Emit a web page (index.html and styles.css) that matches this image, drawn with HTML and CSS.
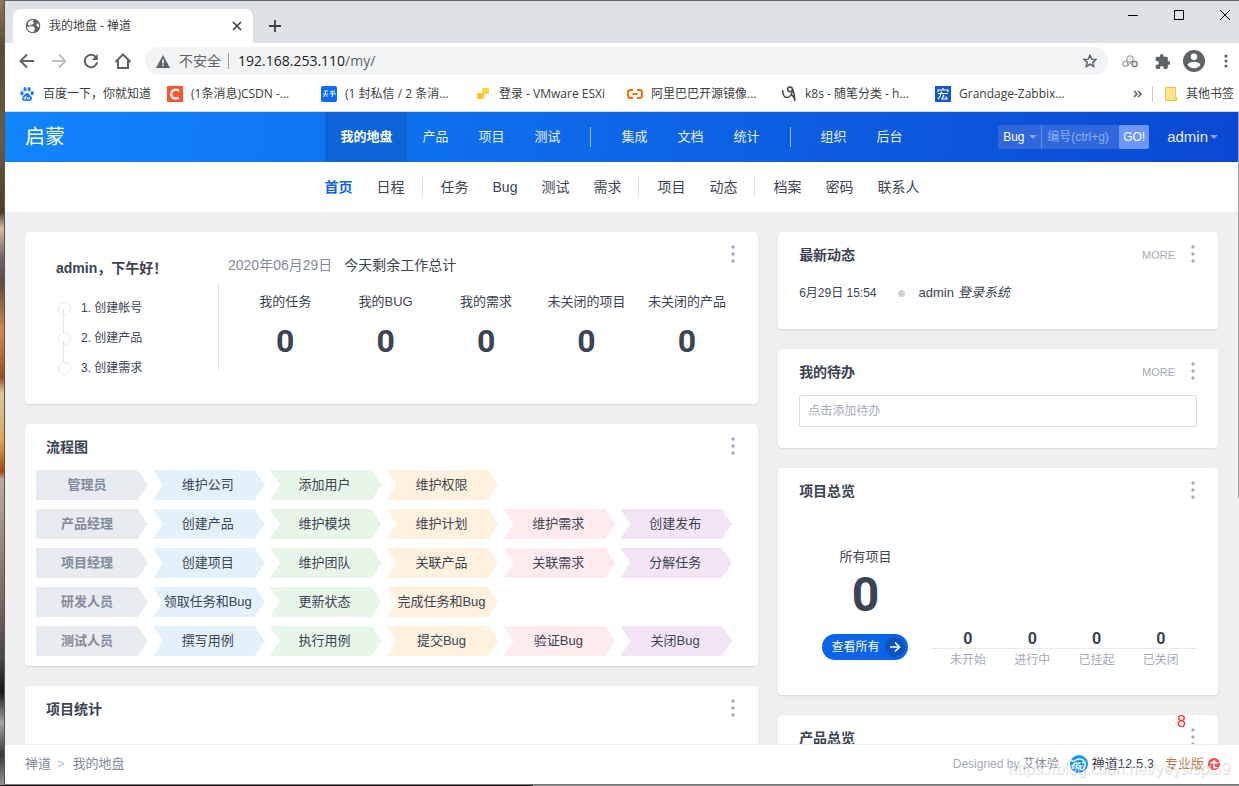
FILE: index.html
```html
<!DOCTYPE html>
<html lang="zh-CN">
<head>
<meta charset="utf-8">
<title>我的地盘 - 禅道</title>
<link rel="stylesheet" href="styles.css">
</head>
<body>
<svg class="defs" aria-hidden="true">
  <symbol id="dots" viewBox="0 0 4 18"><circle cx="2" cy="2" r="1.700"/><circle cx="2" cy="9" r="1.700"/><circle cx="2" cy="16" r="1.700"/></symbol>
</svg>
<div class="desktop">
<div class="window">
  <div class="tabstrip">
    <div class="tab">
      <svg width="16" height="16" viewBox="0 0 16 16"><circle cx="8" cy="8" r="7.300" fill="#5f6368"/><path d="M9 1.800L7.500 3.500 9 5 7 6.800H5L4.500 8l4 .5 1.500 1.800-1.500 3.900C5 14.500 2 12 1.900 8.600L5.500 9.500 3 6.800 3.200 4.500C4.500 2.500 7 1.700 9 1.800zM11 5.500l2.800.5.300 3-2-.5z" fill="#fff"/></svg>
      <span class="tab-title">我的地盘 - 禅道</span>
      <button class="bare" aria-label="关闭标签页"><svg width="10" height="10" viewBox="0 0 10 10" stroke="#3c4043" stroke-width="1.700"><path d="M1 1l8 8M9 1L1 9"/></svg></button>
    </div>
    <button class="bare" aria-label="新标签页"><svg width="12" height="12" viewBox="0 0 12 12" stroke="#3c4043" stroke-width="1.800"><path d="M6 0v12M0 6h12"/></svg></button>
    <div class="wincontrols">
      <button class="bare" aria-label="最小化"><svg width="10" height="10" viewBox="0 0 10 10" stroke="#000"><path d="M0 5.500h10"/></svg></button>
      <button class="bare" aria-label="最大化"><svg width="10" height="10" viewBox="0 0 10 10" stroke="#000" fill="none"><path d="M.5.5h9v9h-9z"/></svg></button>
      <button class="bare" aria-label="关闭"><svg width="10" height="10" viewBox="0 0 10 10" stroke="#000"><path d="M0 0l10 10M10 0L0 10"/></svg></button>
    </div>
  </div>
  <div class="toolbar">
    <button class="bare" aria-label="后退"><svg width="16" height="16" viewBox="0 0 16 16" stroke="#5f6368" stroke-width="2" fill="none"><path d="M15 8H2M8 1.500L1.500 8 8 14.500"/></svg></button>
    <button class="bare" aria-label="前进"><svg width="16" height="16" viewBox="0 0 16 16" stroke="#bdc1c6" stroke-width="2" fill="none"><path d="M1 8h13M8 1.500L14.500 8 8 14.500"/></svg></button>
    <button class="bare" aria-label="重新加载"><svg width="16" height="16" viewBox="0 0 16 16" fill="none"><path d="M13 4.200A6.200 6.200 0 1 0 14.200 9.300" stroke="#5f6368" stroke-width="2"/><path d="M14.800 1v6H8.800z" fill="#5f6368"/></svg></button>
    <button class="bare" aria-label="主页"><svg width="16" height="16" viewBox="0 0 16 16" fill="none" stroke="#5f6368" stroke-width="2"><path d="M.5 9L8 1.500 15.500 9M3 7.500V15h10V7.500"/></svg></button>
    <div class="omnibox">
      <svg width="14" height="13" viewBox="0 0 14 13"><path d="M7 0l7 13H0z" fill="#5f6368"/><path d="M6.300 4.500h1.500v4H6.300zM6.300 9.500h1.500V11H6.300z" fill="#fff"/></svg>
      <span class="insecure">不安全</span>
      <span class="url"><b>192.168.253.110</b>/my/</span>
      <button class="bare" aria-label="收藏"><svg width="14" height="14" viewBox="0 0 16 16" fill="none" stroke="#5f6368" stroke-width="1.700"><path d="M8 1.500l1.900 4.400 4.900.4-3.700 3.200 1.100 4.700L8 11.700l-4.200 2.500 1.100-4.700L1.200 6.300l4.900-.4z"/></svg></button>
    </div>
    <div class="extensions">
      <svg width="16" height="13" viewBox="0 0 16 13" fill="none" stroke="#a2a4a7" stroke-width="1.300"><circle cx="3.300" cy="8.900" r="2.500"/><circle cx="8" cy="4" r="3.200"/><circle cx="12.700" cy="8.900" r="2.600" stroke="#74777b"/><path d="M5.200 10.800L10.200 6.800M7.500 4h1M12.300 8.900h.9"/></svg>
      <svg width="15" height="15" viewBox="1 1 21 21" fill="#5f6368"><path d="M20.500 11H19V7a2 2 0 0 0-2-2h-4V3.500a2.500 2.500 0 0 0-5 0V5H4a2 2 0 0 0-2 2v3.800h1.500a2.700 2.700 0 0 1 0 5.400H2V20a2 2 0 0 0 2 2h3.800v-1.500a2.700 2.700 0 0 1 5.400 0V22H17a2 2 0 0 0 2-2v-4h1.500a2.500 2.500 0 0 0 0-5z"/></svg>
      <svg width="22" height="22" viewBox="0 0 22 22"><circle cx="11" cy="11" r="11" fill="#5f6368"/><circle cx="11" cy="6.700" r="3.200" fill="#fff"/><path d="M4.500 14.800C5.500 12.500 8.700 11.800 11 11.800s5.500.7 6.500 3a7.800 7.800 0 0 1-13 0z" fill="#fff"/></svg>
      <svg width="4" height="14" viewBox="0 0 4 14" fill="#5f6368"><circle cx="2" cy="2" r="1.600"/><circle cx="2" cy="7" r="1.600"/><circle cx="2" cy="12" r="1.600"/></svg>
    </div>
  </div>
  <nav class="bookmarks" aria-label="书签">
    <a href="#" class="first"><svg width="16" height="16" viewBox="0 0 16 16" fill="#2b7cf0"><ellipse cx="3" cy="7.200" rx="1.700" ry="2.200"/><ellipse cx="6" cy="3.300" rx="1.600" ry="2.200"/><ellipse cx="10.200" cy="3.300" rx="1.600" ry="2.200"/><ellipse cx="13.200" cy="7.200" rx="1.600" ry="2.100"/><path d="M8 7c2.300 0 2.500 2 4 3.300 2.200 2 .8 4.700-1.300 4.700H5.300C3 15 2 12.200 4 10.300 5.700 9 6 7 8 7z"/><path d="M6.800 10v3H5.500c-1 0-1-1.500 0-1.500h1M8.700 11v2h1.800v-2" fill="none" stroke="#fff" stroke-width=".9"/></svg>百度一下，你就知道</a>
    <a href="#"><svg width="16" height="16" viewBox="0 0 16 16"><path d="M0 0h16v16H0z" fill="#fc5531"/><path d="M12 4.800C9 2.800 4.500 3.500 4.200 8c0 4.500 4.200 5.300 7.500 3.700" fill="none" stroke="#fff" stroke-width="2.200"/></svg>(1条消息)CSDN -...</a>
    <a href="#"><svg width="16" height="16" viewBox="0 0 16 16"><rect width="16" height="16" rx="2" fill="#0a6cff"/><path d="M3 5h4M2 8h5M4.500 5v3L2.500 11M5 9l1.500 2M9 5.500l5-.5M8.700 8H15M11.500 5.500v5l-1 .5M10 6.500l.3.800M13.500 6.300l-.4 1" fill="none" stroke="#fff" stroke-width=".9"/></svg>(1 封私信 / 2 条消...</a>
    <a href="#" class="short"><svg width="16" height="16" viewBox="0 0 16 16"><rect x="2" y="7" width="7" height="6" rx="1" fill="#fbc32a"/><rect x="7" y="2" width="7" height="6" rx="1" fill="#fcd23c"/></svg>登录 - VMware ESXi</a>
    <a href="#"><svg width="16" height="16" viewBox="0 0 16 16" fill="none" stroke="#ff6a00" stroke-width="2"><path d="M6 4H3.500Q1 4 1 6.500v3Q1 12 3.500 12H6M10 4h2.500Q15 4 15 6.500v3q0 2.500-2.500 2.500H10M5.500 8h5"/></svg>阿里巴巴开源镜像...</a>
    <a href="#"><svg width="16" height="16" viewBox="0 0 16 16" fill="none" stroke="#444" stroke-width="1.500"><path d="M1.500 4c.5 5 1.500 7.500 4 7.500 3 0 5.500-3 6-7"/><circle cx="9" cy="3.300" r="2.400"/><path d="M10 8.500c2 1 3.500 3 4 6.500M11.500 3c1.500 3 2 7 2.300 11"/></svg>k8s - 随笔分类 - h...</a>
    <a href="#"><svg width="16" height="16" viewBox="0 0 16 16"><path d="M0 0h16v16H0z" fill="#1557c8"/><path d="M8 2v2M3 6V4h10v2M3 7.500h10M6.500 5.500C6 9 5 11 3 13M9 8.500L7 13h5M10.500 10.500l2 3" fill="none" stroke="#fff" stroke-width="1.200"/></svg>Grandage-Zabbix...</a>
    <div class="bookmarks-end">
      <svg width="9" height="8" viewBox="0 0 9 8" fill="none" stroke="#5f6368" stroke-width="1.600"><path d="M1 1l3 3-3 3M5 1l3 3-3 3"/></svg>
      <span class="bar"></span>
      <a href="#"><svg width="13" height="14" viewBox="0 0 13 14"><path d="M.5.5h10v9l1.500 1v3H.5z" fill="#ffe48c" stroke="#e8c64c"/><path d="M9.500 13v-3" stroke="#e8c64c"/></svg>其他书签</a>
    </div>
  </nav>

  <div class="page">
    <header class="header">
      <a class="brand" href="#">启蒙</a>
      <nav class="mainnav">
        <a class="active" href="#">我的地盘</a><a href="#">产品</a><a href="#">项目</a><a href="#">测试</a><i></i><a href="#">集成</a><a href="#">文档</a><a href="#">统计</a><i></i><a href="#">组织</a><a href="#">后台</a>
      </nav>
      <div class="tools">
        <form class="search">
          <label class="kind"><select aria-label="搜索类型"><option>Bug</option></select></label>
          <input type="text" placeholder="编号(ctrl+g)" aria-label="编号">
          <button type="button">GO!</button>
        </form>
        <a class="user" href="#">admin</a>
      </div>
    </header>
    <nav class="subnav">
      <a class="active" href="#">首页</a><a href="#">日程</a><i></i><a href="#">任务</a><a href="#">Bug</a><a href="#">测试</a><a href="#">需求</a><i></i><a href="#">项目</a><a href="#">动态</a><i></i><a href="#">档案</a><a href="#">密码</a><a href="#">联系人</a>
    </nav>
    <main class="dashboard">
      <div class="column">
        <section class="card welcome">
          <button class="bare more corner" aria-label="更多"><svg><use href="#dots"/></svg></button>
          <div class="greeting">
            <h2>admin，下午好！</h2>
            <ol><li><a href="#">1. 创建帐号</a></li><li><a href="#">2. 创建产品</a></li><li><a href="#">3. 创建需求</a></li></ol>
          </div>
          <div class="summary">
            <p><time>2020年06月29日</time>今天剩余工作总计</p>
            <dl>
              <div><dt>我的任务</dt><dd>0</dd></div>
              <div><dt>我的BUG</dt><dd>0</dd></div>
              <div><dt>我的需求</dt><dd>0</dd></div>
              <div><dt>未关闭的项目</dt><dd>0</dd></div>
              <div><dt>未关闭的产品</dt><dd>0</dd></div>
            </dl>
          </div>
        </section>
        <section class="card">
          <div class="card-head"><h2>流程图</h2><button class="bare more" aria-label="更多"><svg><use href="#dots"/></svg></button></div>
          <div class="flow">
            <div class="flow-row"><b>管理员</b><a href="#">维护公司</a><a href="#">添加用户</a><a href="#">维护权限</a></div>
            <div class="flow-row"><b>产品经理</b><a href="#">创建产品</a><a href="#">维护模块</a><a href="#">维护计划</a><a href="#">维护需求</a><a href="#">创建发布</a></div>
            <div class="flow-row"><b>项目经理</b><a href="#">创建项目</a><a href="#">维护团队</a><a href="#">关联产品</a><a href="#">关联需求</a><a href="#">分解任务</a></div>
            <div class="flow-row"><b>研发人员</b><a href="#">领取任务和Bug</a><a href="#">更新状态</a><a href="#">完成任务和Bug</a></div>
            <div class="flow-row"><b>测试人员</b><a href="#">撰写用例</a><a href="#">执行用例</a><a href="#">提交Bug</a><a href="#">验证Bug</a><a href="#">关闭Bug</a></div>
          </div>
        </section>
        <section class="card tall">
          <div class="card-head"><h2>项目统计</h2><button class="bare more" aria-label="更多"><svg><use href="#dots"/></svg></button></div>
        </section>
      </div>
      <div class="column">
        <section class="card">
          <div class="card-head"><h2>最新动态</h2><a href="#">MORE</a><button class="bare more" aria-label="更多"><svg><use href="#dots"/></svg></button></div>
          <div class="activity"><time>6月29日 15:54</time><span>admin <em>登录系统</em></span></div>
        </section>
        <section class="card">
          <div class="card-head"><h2>我的待办</h2><a href="#">MORE</a><button class="bare more" aria-label="更多"><svg><use href="#dots"/></svg></button></div>
          <div class="todo"><input type="text" placeholder="点击添加待办" aria-label="添加待办"></div>
        </section>
        <section class="card">
          <div class="card-head"><h2>项目总览</h2><button class="bare more" aria-label="更多"><svg><use href="#dots"/></svg></button></div>
          <div class="overview">
            <div class="total">
              <span>所有项目</span><strong>0</strong>
              <a class="pill" href="#">查看所有<svg width="20" height="20" viewBox="0 0 20 20"><circle cx="10" cy="10" r="10" fill="#0d51bd"/><path d="M5 10h9M10 5.500l4.500 4.500-4.500 4.500" fill="none" stroke="#fff" stroke-width="1.700"/></svg></a>
            </div>
            <dl class="status">
              <div><dd>0</dd><dt>未开始</dt></div><div><dd>0</dd><dt>进行中</dt></div><div><dd>0</dd><dt>已挂起</dt></div><div><dd>0</dd><dt>已关闭</dt></div>
            </dl>
          </div>
        </section>
        <section class="card tall">
          <span class="count">8</span>
          <div class="card-head"><h2>产品总览</h2><button class="bare more" aria-label="更多"><svg><use href="#dots"/></svg></button></div>
        </section>
      </div>
    </main>
  </div>
  <footer class="footer">
    <nav class="crumbs"><a href="#">禅道</a><span>&gt;</span><a href="#">我的地盘</a></nav>
    <div class="credits">
      <span class="designed">Designed by <a href="#">艾体验</a></span>
      <a class="version" href="#"><svg width="18" height="18" viewBox="0 0 18 18"><circle cx="9" cy="9" r="9" fill="#0a95fb"/><path d="M1 5.500c2.500 2 4-.8 7-1.300 4.500-.7 8 2.300 7.300 6.300-.6 3-3 4.500-5.500 4M3.500 14c-2-3 0-6 3.500-6.200M10.500 8c-2.500-.3-4.500 1.500-4 4 .5 2 3.800 2.200 4.300.2.200-1.200-1.300-1.900-2.300-1.200M12 7l2 1.500" fill="none" stroke="#fff" stroke-width="1.500"/></svg>禅道12.5.3</a>
      <a class="pro" href="#">专业版<svg width="12" height="12" viewBox="0 0 12 12"><circle cx="6" cy="6" r="6" fill="#f9474b"/><path d="M6 9.500V3M3 6l3-3.300L9 6M6 9.300h2.500" fill="none" stroke="#fff" stroke-width="1.500"/></svg></a>
    </div>
    <span class="watermark">https://blog.csdn.net/yeyslspi59</span>
  </footer>
</div>
</div>
</body>
</html>
```
FILE: styles.css
```css
* { box-sizing: border-box; }
body, h2, p, dl, dd, ol { margin: 0; padding: 0; }
ol { list-style: none; }
a { color: inherit; text-decoration: none; }
i, em { font-weight: normal; }
svg { flex: none; display: block; }
button, input, select { font: inherit; color: inherit; }
body {
  font: 13px/20px "Liberation Sans", "Noto Sans CJK SC", sans-serif;
  color: #3c4353;
}
.defs { position: absolute; width: 0; height: 0; }
.bare { display: flex; padding: 0; border: 0; background: none; }

.desktop {
  height: 100vh;
  padding: 1px 1px 1px 5px;
  overflow: hidden;
  background:
    linear-gradient(90deg, #1b1719 0 43%, #8f8f8f 43%) bottom / 100% 1px no-repeat,
    linear-gradient(#666, #666) top right / calc(100% - 5px) 1px no-repeat,
    linear-gradient(90deg, transparent 4px, #555 4px 5px, transparent 5px),
    linear-gradient(#8a775d 0, #5d4a33 6%, #6b5a3f 18%, #4b3c26 27%, #d5bba5 29%, #6f6266 33%, #5e4d45 36%, #d08a48 42%, #9c4c1e 48%, #dcc9a0 50%, #dca656 56%, #a44a10 60%, #b9aaa2 61%, #7c706a 75%, #4a433f 84%, #17171b 88%, #a8a3a0 92%, #393436 96%, #999 100%);
}
.window { height: 100%; display: flex; flex-direction: column; background: #fff; margin-right: -1px; }

/* browser chrome */
.tabstrip { display: flex; align-items: center; height: 42px; background: #dee1e6; padding: 0 9px 0 8px; gap: 16px; }
.tab {
  align-self: flex-end; display: flex; align-items: center; gap: 8px; width: 240px; height: 34px;
  padding: 0 11px 0 12px; border-radius: 8px 8px 0 0; background: #fff; color: #3c4043;
  font: 12px/20px "Open Sans", "Noto Sans CJK SC", sans-serif;
}
.tab-title { flex: 1; }
.tabstrip > .bare { margin-top: 8px; }
.wincontrols { display: flex; gap: 36px; margin-left: auto; margin-bottom: 14px; }
.toolbar { display: flex; align-items: center; gap: 16px; height: 36px; padding-left: 14px; }
.omnibox {
  flex: 1; display: flex; align-items: center; height: 28px; padding: 0 11px; border-radius: 14px; background: #f1f3f4;
  margin-left: -2px; color: #5f6368; font: 14px/20px "Open Sans", "Noto Sans CJK SC", sans-serif;
}
.insecure { margin-left: 9px; padding-right: 7px; line-height: 16px; border-right: 1px solid #9aa0a6; }
.url { flex: 1; margin-left: 9px; }
.url b { font-weight: normal; color: #202124; }
.extensions { display: grid; grid-template-columns: repeat(4, 32px); place-items: center; margin: 0 -3px 0 -10px; }
.bookmarks {
  display: flex; align-items: center; height: 33px; padding: 0 5px 2px 14px; border-bottom: 1px solid #d9dbdd;
  font: 12px/20px "Open Sans", "Noto Sans CJK SC", sans-serif; color: #3c4043; white-space: nowrap;
}
.bookmarks a { display: flex; align-items: center; gap: 8px; }
.bookmarks > a { flex: 0 1 154px; }
.bookmarks > .first { flex-basis: 148px; }
.bookmarks > .short { flex-basis: 152px; }
.bookmarks-end { display: flex; align-items: center; gap: 10px; margin-left: auto; }
.bar { width: 1px; height: 16px; background: #c6c8ca; margin-right: 2px; }

/* application */
.page { position: relative; flex: 1; min-height: 0; overflow: hidden; background: #efefef; }
.page::after { content: ""; position: absolute; top: 0; right: 0; width: 1px; height: 61%; background: #a2a2a2; }
.header {
  display: grid; grid-template-columns: 1fr auto 1fr; align-items: center; height: 50px; padding: 0 21px 0 20px;
  background: linear-gradient(100deg, #1185fc, #0a48d1); color: #e9f0fd;
}
.brand { font-size: 20px; line-height: 30px; color: #fff; }
.mainnav, .subnav { display: flex; align-items: center; }
.mainnav a { padding: 0 15px; line-height: 50px; }
.mainnav .active { font-weight: bold; color: #fff; background: #0c64d6; }
.mainnav i { width: 1px; height: 20px; margin: 0 15px; background: #9cc0f8; }
.tools { display: flex; justify-content: flex-end; align-items: center; gap: 18px; }
.search { display: flex; height: 24px; border-radius: 2px; overflow: hidden; background: #3068dc; font-size: 12px; }
.kind { position: relative; width: 44px; border-right: 1px solid #5c8bea; }
.kind select { appearance: none; width: 100%; height: 24px; padding: 0 5px; border: 0; background: none; color: #fff; }
.kind::after, .user::after { content: ""; border: 4px solid transparent; border-top-color: #83a6ee; border-bottom: 0; }
.kind::after { position: absolute; right: 4px; top: 10px; pointer-events: none; }
.search input { width: 77px; padding: 0 5px; border: 0; background: none; }
.search input::placeholder { color: #8fb0f0; }
.search button { width: 30px; padding: 0; border: 0; border-radius: 2px; background: #6c96fc; color: #fff; }
.user { display: flex; align-items: center; gap: 2px; font-size: 15px; }
.subnav { justify-content: center; height: 50px; background: #fff; font-size: 14px; }
.subnav a { padding: 0 12px; }
.subnav .active { font-weight: bold; color: #0c64eb; }
.subnav i { width: 1px; height: 20px; margin: 0 6px 0 5px; background: #e0e2e6; }

.dashboard { display: grid; grid-template-columns: 5fr 3fr; gap: 20px; padding: 20px 21px 20px 20px; }
.column { display: flex; flex-direction: column; gap: 20px; min-width: 0; }
.card { position: relative; background: #fff; border-radius: 4px; box-shadow: 0 1px 2px rgba(0,0,0,.1); }
.tall { min-height: 200px; }
h2 { font-size: 14px; line-height: 20px; }
.card-head { display: flex; align-items: center; gap: 16px; height: 46px; padding: 0 23px 0 21px; }
.card-head h2 { flex: 1; }
.card-head a { font-size: 11px; color: #a6aab8; }
.more svg { width: 4px; height: 18px; fill: #a0adc6; }
.corner { position: absolute; top: 13px; right: 23px; }
.card-head .more { margin-bottom: 2px; }

.welcome { display: flex; padding: 23px 21px 21px 31px; }
.greeting { width: 163px; padding-top: 3px; }
.greeting ol { margin-top: 15px; padding: 0 0 0 1px; font-size: 12px; }
.greeting li { position: relative; padding: 5px 0 5px 24px; }
.greeting li::before { content: ""; position: absolute; left: 1px; top: 9px; width: 11px; height: 11px; border: 1px solid #e6e7ea; border-radius: 50%; }
.greeting li + li::after { content: ""; position: absolute; left: 6px; top: -13px; width: 1px; height: 22px; background: #e6e7ea; }
.summary { flex: 1; }
.summary p { padding-left: 9px; font-size: 14px; }
.summary time { margin-right: 12px; color: #838a9d; }
.summary dl { display: grid; grid-template-columns: repeat(5, 1fr); height: 87px; margin: 8px 0 0 -1px; padding: 9px 0 0 16px; border-left: 1px solid #e4e5e9; text-align: center; white-space: nowrap; }
.summary dd, .total strong, .status dd { font-family: Roboto, "Liberation Sans", sans-serif; font-weight: bold; }
.summary dd { margin-top: 9px; font-size: 32px; line-height: 40px; }

.flow { display: grid; gap: 9px; padding: 0 26px 10px 11px; }
.flow-row { display: grid; grid-template-columns: repeat(6, minmax(0, 1fr)); gap: 5px; height: 30px; line-height: 29px; text-align: center; white-space: nowrap; }
.flow-row > * { padding-right: 2px; clip-path: polygon(0 0, calc(100% - 10px) 0, 100% 50%, calc(100% - 10px) 100%, 0 100%, 10px 50%); }
.flow-row b { padding-right: 10px; background: #e8ebf0; color: #838a9d; clip-path: polygon(0 0, calc(100% - 10px) 0, 100% 50%, calc(100% - 10px) 100%, 0 100%); }
.flow-row :nth-child(2) { background: #e3f1fd; }
.flow-row :nth-child(3) { background: #e8f5e9; }
.flow-row :nth-child(4) { background: #fff1de; }
.flow-row :nth-child(5) { background: #ffebee; }
.flow-row :nth-child(6) { background: #f3e5f6; }

.activity { display: flex; align-items: center; padding: 3px 21px 24px; height: 51px; }
.activity time { font-size: 12px; }
.activity span { display: flex; align-items: center; gap: 4px; }
.activity span::before { content: ""; width: 7px; height: 7px; margin: 0 10px 0 21px; border-radius: 50%; background: #cbd0db; }
.todo { padding: 0 21px 21px; }
.todo input { display: block; width: 100%; height: 32px; padding: 0 8px; border: 1px solid #dcdde0; border-radius: 2px; font-size: 12px; }
.todo input::placeholder { color: #a6aab8; }
.overview { display: grid; grid-template-columns: 1fr 2fr; align-items: end; padding: 33px 21px 35px; }
.total { display: flex; flex-direction: column; align-items: center; }
.total strong { margin-bottom: 11px; font-size: 48px; line-height: 56px; }
.pill { display: flex; align-items: center; gap: 6px; height: 26px; padding: 0 3px 0 9px; border-radius: 13px; background: #0c64eb; color: #fff; font-size: 12px; }
.status { display: grid; grid-template-columns: repeat(4, 1fr); padding: 0 4px; margin-bottom: -10px; text-align: center; font-size: 12px; background: linear-gradient(#e9eaed, #e9eaed) 0 18px / 100% 1px no-repeat; }
.status dd { font-size: 16px; line-height: 18px; }
.status dt { padding-top: 2px; color: #a6aab8; }
.count { position: absolute; right: 32px; top: -3px; font-size: 16px; color: #f5302e; }

.footer { position: relative; display: flex; justify-content: space-between; align-items: center; height: 41px; padding: 0 19px 2px 20px; background: #fff; border-top: 1px solid #eceef1; border-bottom: 1px solid #777; }
.crumbs { display: flex; gap: 6px; color: #838a9d; }
.crumbs span { margin-right: 2px; color: #b9bdc8; }
.credits { display: flex; align-items: center; gap: 11px; }
.credits > a { display: flex; align-items: center; gap: 4px; }
.designed { color: #a6aab8; font-size: 12px; }
.designed a { color: #838a9d; }
.pro { color: #bd7b46; }
.watermark { position: absolute; right: 9px; bottom: 5px; font-size: 16px; color: rgba(255,255,255,.6); text-shadow: 1px 1px 1px rgba(0,0,0,.16); pointer-events: none; }
```
